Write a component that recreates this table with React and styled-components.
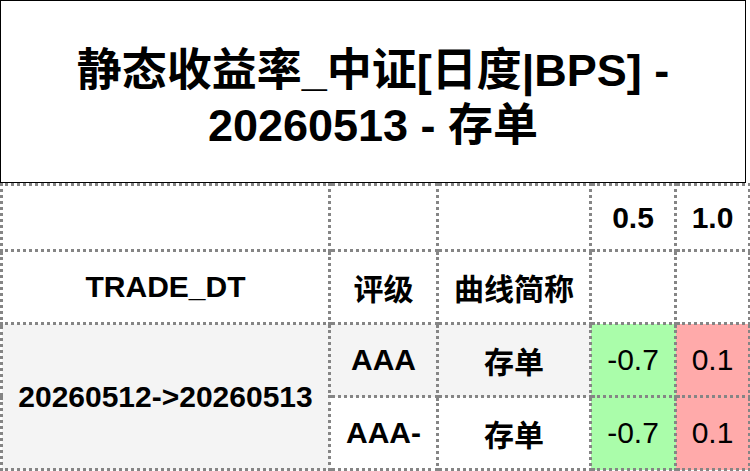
import React from 'react'
import styled, {createGlobalStyle} from 'styled-components'

const GlobalStyle = createGlobalStyle`
    html, body {
        margin: 0;
        padding: 0;
        background: #ffffff;
    }
    body {
        font-family: "Liberation Sans", "Noto Sans CJK SC", sans-serif;
        color: #000;
    }
`

const Page = styled.div`
    width: 748px;
`

const Title = styled.div`
    box-sizing: border-box;
    width: 746px;
    height: 183px;
    border: 1px solid #000;
    padding: 42px 10px 0;
    text-align: center;
    font-size: 45px;
    font-weight: bold;
    line-height: 55px;
`

const Table = styled.table`
    width: 748px;
    table-layout: fixed;
    border-collapse: collapse;
    font-size: 30px;
`

const Row = styled.tr`
    height: ${p => p.h}px;
`

const Cell = styled.td`
    border: 3px dotted #858585;
    padding: 0 2px;
    text-align: center;
    vertical-align: middle;
    font-weight: ${p => (p.plain ? 'normal' : 'bold')};
    background: ${p => p.bg || '#ffffff'};
    white-space: nowrap;
`

const GREY = '#f4f4f4'
const GREEN = '#aafdaa'
const RED = '#ffaaaa'

const rows = [
    {rating: 'AAA', curve: '存单', v05: '-0.7', v10: '0.1', bg: GREY},
    {rating: 'AAA-', curve: '存单', v05: '-0.7', v10: '0.1', bg: '#ffffff'},
]

const App = () => {
    return (
        <Page>
            <GlobalStyle />
            <Title>
                静态收益率_中证[日度|BPS] -<br />
                20260513 - 存单
            </Title>
            <Table>
                <colgroup>
                    <col style={{width: 328}} />
                    <col style={{width: 108}} />
                    <col style={{width: 153}} />
                    <col style={{width: 85}} />
                    <col style={{width: 74}} />
                </colgroup>
                <tbody>
                    <Row h={66}>
                        <Cell />
                        <Cell />
                        <Cell />
                        <Cell>0.5</Cell>
                        <Cell>1.0</Cell>
                    </Row>
                    <Row h={73}>
                        <Cell>TRADE_DT</Cell>
                        <Cell>评级</Cell>
                        <Cell>曲线简称</Cell>
                        <Cell />
                        <Cell />
                    </Row>
                    {rows.map((r, i) => (
                        <Row h={73} key={r.rating}>
                            {i === 0 &&
                                <Cell rowSpan={2} bg={GREY}>20260512-&gt;20260513</Cell>
                            }
                            <Cell bg={r.bg}>{r.rating}</Cell>
                            <Cell bg={r.bg}>{r.curve}</Cell>
                            <Cell plain bg={GREEN}>{r.v05}</Cell>
                            <Cell plain bg={RED}>{r.v10}</Cell>
                        </Row>
                    ))}
                </tbody>
            </Table>
        </Page>
    )
}

export default App
